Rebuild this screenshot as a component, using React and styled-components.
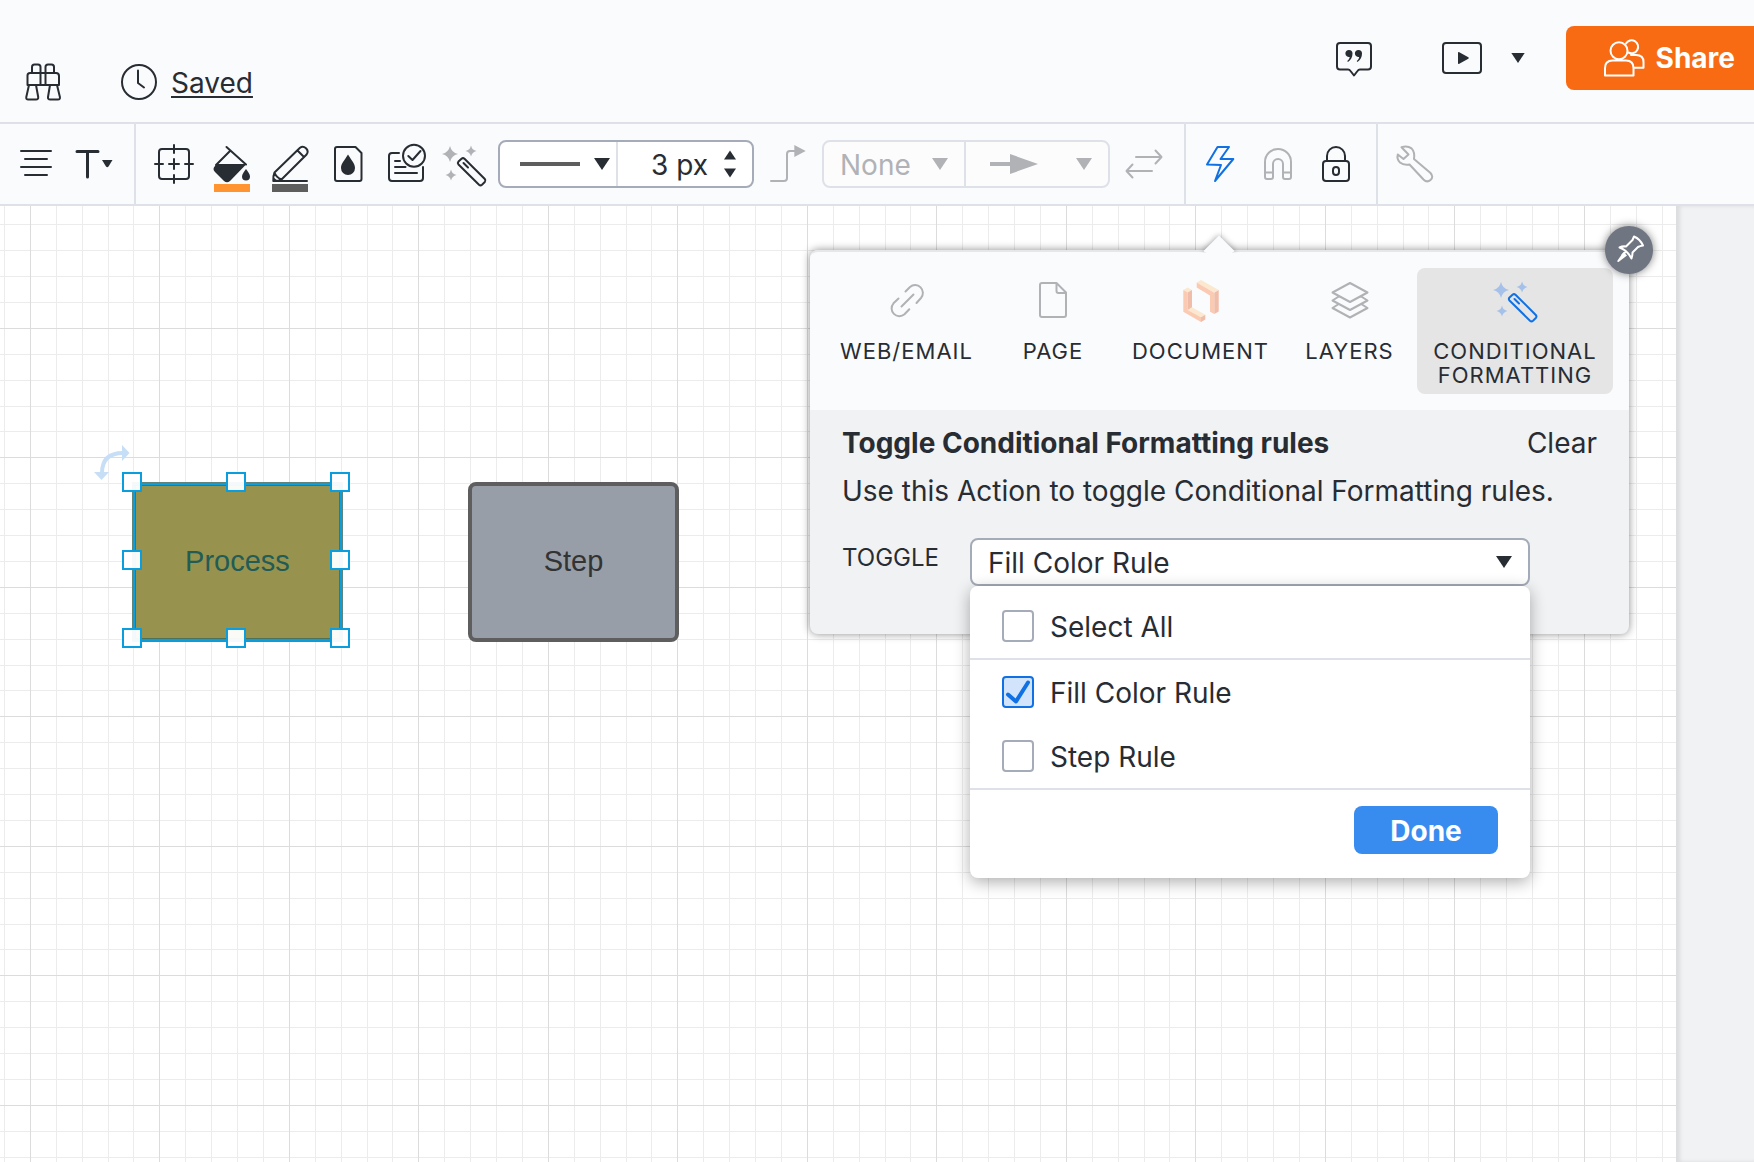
import React, { useState } from "react";
import styled, { createGlobalStyle, css } from "styled-components";

const color = {
  ink: "#282c33",
  muted: "#b0b2b5",
  surface: "#fafbfd",
  panel: "#f1f2f4",
  line: "#dfe1e8",
  outline: "#a5abb8",
  blue: "#1071e5",
  button: "#388cf0",
  orange: "#f96b13",
  handle: "#0a9edf",
};

const GlobalStyle = createGlobalStyle`
  *, *::before, *::after { box-sizing: border-box; }
  body {
    margin: 0;
    color: ${color.ink};
    font-family: Inter, "Liberation Sans", sans-serif;
    font-size: 28px;
    line-height: 32px;
  }
  button, input, select {
    margin: 0;
    padding: 0;
    border: 0;
    background: none;
    color: inherit;
    font: inherit;
  }
  button { cursor: pointer; }
  button:disabled { cursor: default; }
  svg { display: block; flex: none; overflow: visible; }
  h2, p { margin: 0; }
`;

/* ---------- icons ---------- */

const Svg = styled.svg.attrs((p) => ({
  viewBox: p.viewBox || "0 0 40 40",
  "aria-hidden": true,
}))`
  width: ${(p) => p.$w || 40}px;
  height: ${(p) => p.$h || 40}px;
  fill: none;
  stroke: currentColor;
  stroke-width: 2;
  stroke-linejoin: round;
  stroke-linecap: round;
`;

const Solid = styled.g`
  fill: currentColor;
  stroke: none;
`;

const Caret = ({ w = 16, h = 12 }) => (
  <Svg viewBox="0 0 16 12" $w={w} $h={h}>
    <Solid><path d="M0 0H16L8 12Z" /></Solid>
  </Svg>
);

const Binoculars = () => (
  <Svg>
    <path d="M9 11V5q0-2.5 2.500-2.500h3.500q2.500 0 2.500 2.500V23M31 11V5q0-2.500-2.500-2.500h-3.500q-2.500 0-2.500 2.500V23" />
    <path d="M4.500 23V13.500q0-2.500 2.500-2.500H33q3 0 3 3V23Z" />
    <path d="M6 23 3.300 35q-.5 2.500 2 2.500H13q2.500 0 2.200-2.500L13 23M34 23l2.900 12q.5 2.500-2 2.500H27.200q-2.500 0-2.200-2.500L27 23" />
  </Svg>
);

const Clock = () => (
  <Svg>
    <circle cx="20" cy="20" r="17" />
    <path d="M19 8.500V21l6 4.500" />
  </Svg>
);

const Comment = () => (
  <Svg>
    <path d="M6 5H34q3 0 3 3V28.500q0 3-3 3H26q-1.500 0-2.500 1.500L20 37.500 16.500 33q-1-1.500-2.500-1.500H6q-3 0-3-3V8q0-3 3-3Z" />
    <Solid>
      <path d="M15 12a3.500 3.500 0 0 1 3.500 3.500c0 3.500-1.500 6.500-4.500 8.500l-.8-.9c1.400-1.200 2.200-2.500 2.500-4.200A3.500 3.500 0 1 1 15 12Z" />
      <path d="M24.500 12a3.500 3.500 0 0 1 3.500 3.500c0 3.500-1.500 6.500-4.500 8.500l-.8-.9c1.400-1.200 2.200-2.500 2.500-4.200a3.500 3.500 0 1 1-.7-6.900Z" />
    </Solid>
  </Svg>
);

const Play = () => (
  <Svg>
    <rect x="1" y="5" width="38" height="30" rx="3" />
    <Solid><path d="M16 15q0-1.500 1.300-.8l9 5q1.200.8 0 1.600l-9 5Q16 26.500 16 25Z" /></Solid>
  </Svg>
);

const People = () => (
  <Svg>
    <circle cx="15" cy="12.700" r="8.500" />
    <path d="M1 37.500V30q0-7.500 7.500-7.500H22q7.500 0 7.500 7.500V37.500Z" />
    <path d="M22 5.500A6.500 6.500 0 1 1 24.500 14.500M27 17H32q7.500 0 7.500 7V29.700H30" />
  </Svg>
);

const AlignCenter = () => (
  <Svg>
    <path d="M5 7H35M9 15H31M5 23H35M9 31H31" />
  </Svg>
);

const TextTool = () => (
  <Svg>
    <path d="M3 7.500H24M13.500 7.500V33" strokeWidth="3" />
    <Solid><path d="M28 16H38.500L34.500 22.500Q33.200 24 32 22.500Z" /></Solid>
  </Svg>
);

const Frame = () => (
  <Svg>
    <rect x="5" y="5" width="30" height="30" rx="3" />
    <path d="M20 1V9M20 31V39M1 20H9M31 20H39M15 20H25M20 15V25" />
  </Svg>
);

const Bucket = () => (
  <Svg>
    <path d="M14.500 3 34 20.500M18.500 6.500 4 21" />
    <Solid>
      <path d="M5 20H34.500L18 37Q15 39.500 12 37L3 28Q0 25 3 22Z" />
      <path d="M34 25c2 3 4 5 4 7.500a4 4 0 0 1-8 0c0-2.500 2-4.500 4-7.500Z" />
      <rect x="2" y="40" width="36" height="8" fill="#ff9430" />
    </Solid>
  </Svg>
);

const Pencil = () => (
  <Svg>
    <path d="M4.500 28.500 30 3.700q3-2.200 6 .6 3 3 .6 6.200L11.500 35.500Q8 37.500 3.300 37 3 32 4.500 28.500ZM27.500 6.500l6 6M4.500 28.500q1.500 5 7 7M3.500 37H37" />
    <Solid>
      <path d="M3 37V33L8 37Z" />
      <rect x="2" y="40" width="36" height="8" fill="#5e5e5e" />
    </Solid>
  </Svg>
);

const Opacity = () => (
  <Svg>
    <path d="M9 3H27.500L33.500 9V35q0 2-2 2H9Q7 37 7 35V5Q7 3 9 3Z" />
    <Solid><path d="M20 10.500c3.500 6 7 9 7 13.500a7 7 0 0 1-14 0c0-4.500 3.500-7.500 7-13.500Z" /></Solid>
  </Svg>
);

const NoteCheck = () => (
  <Svg>
    <path d="M13 9H6Q3 9 3 12V34q0 3 3 3H34q3 0 3-3V23M9 17h5M9 23H19.500M9 29H31" />
    <circle cx="28" cy="11.700" r="11" />
    <path d="M22.300 12l4.200 4 8-9" />
  </Svg>
);

const Wand = ({ tint }) => (
  <Svg>
    <Solid>
      <g fill={tint}>
        <path d="M6 2Q7.500 8.500 14 10 7.500 11.500 6 18 4.500 11.500-2 10 4.500 8.500 6 2Z" />
        <path d="M27 1.500Q28 6 32.500 7 28 8 27 12.500 26 8 21.500 7 26 6 27 1.500Z" />
        <path d="M7 25.500Q8 30 12.500 31 8 32 7 36.500 6 32 1.500 31 6 30 7 25.500Z" />
      </g>
    </Solid>
    <path d="M14.500 17.500 17.500 14.700q1.500-1.200 3 0L40.800 35q1.300 1.500 0 3L38 40.700q-1.500 1.300-3 0L14.500 20.500q-1.300-1.500 0-3ZM19.500 19l4.500 4.500" />
  </Svg>
);

const Elbow = () => (
  <Svg>
    <path d="M3 37H16q3 0 3-3V10q0-3 3-3h5" />
    <Solid><path d="M26.300 1 37.700 7 26.300 13Z" /></Solid>
  </Svg>
);

const Swap = () => (
  <Svg>
    <path d="M12 13H37.500M31.500 6.500l6 6.500-6 6.500M28 27H2.500M8.500 20.500l-6 6.500 6 6.500" />
  </Svg>
);

const Bolt = () => (
  <Svg>
    <path d="M17.500 3H29L20.500 15H33.300L15 37 21 21 7 20.500Z" />
  </Svg>
);

const Magnet = () => (
  <Svg>
    <path d="M7 18a13 13 0 0 1 26 0V33q0 2-2 2H27q-2 0-2-2V20a5 5 0 0 0-10 0V33q0 2-2 2H9q-2 0-2-2ZM7 28.500h8M25 28.500h8" />
  </Svg>
);

const Lock = () => (
  <Svg>
    <rect x="7" y="17" width="26" height="20" rx="3" />
    <path d="M11 17V12a9 9 0 0 1 18 0V17" />
    <rect x="17" y="23" width="6" height="8" rx="3" />
  </Svg>
);

const Wrench = () => (
  <Svg>
    <path d="M7.500 3.200q6-1.800 10 1.200 3.500 3.500 2.500 10.500L36.500 29q3.500 4 0 7-3.500 3-7-.5L15.500 20.500q-6 1-9.500-2Q2.500 15 3.800 10.500L9.500 15 14.500 10.500Z" />
  </Svg>
);

const LinkIcon = () => (
  <Svg>
    <path d="M18.500 11.500 23 7a7.800 7.800 0 0 1 11 11l-4.500 5M11.500 18.500 6.500 23.300a7.800 7.800 0 0 0 11 11l4.800-5M14.500 26.500l12-12" />
  </Svg>
);

const PageIcon = () => (
  <Svg>
    <path d="M9 3H23.500L33 12.500V35q0 2-2 2H9Q7 37 7 35V5Q7 3 9 3ZM23.500 3v8q0 2 2 2H33" />
  </Svg>
);

const DocumentIcon = () => (
  <Svg>
    <Solid>
      <path fill="#fbe8cf" d="M2.300 10 6.700 7.500 11 10 6.700 12.500ZM6.700 30 11 27.300 24.300 34.700 20 37.300ZM15.700 2.500 20 0 37.700 10 33.300 12.700Z" />
      <path fill="#fbcab3" d="M2.300 10 6.700 12.500V30L20 37.300V42L2.300 31.800ZM15.700 2.500 33.300 12.700V34L29 31.700V15.500L15.700 7.500Z" />
      <path fill="#efbda9" d="M6.700 12.500 11 10V27.300L6.700 30ZM20 37.300 24.300 34.700V39.500L20 42ZM33.300 12.700 37.700 10V31.500L33.300 34Z" />
    </Solid>
  </Svg>
);

const LayersIcon = () => (
  <Svg>
    <path d="M20 3 37.500 12.500 20 22 2.500 12.500ZM8 17 2.500 20.500 20 30 37.500 20.500 32 17M8 24.500 2.500 28 20 37.500 37.500 28 32 24.500" />
  </Svg>
);

const PinIcon = () => (
  <Svg viewBox="0 0 48 48" $w={48} $h={48}>
    <path d="M29 10.500q6 2.500 9 9-3 .5-5 1.500l-5.500 5.500q0 3-1 6Q22 24 14.500 21.500q3-1.500 6.500-1L27.500 14ZM20 26.500l-2.500 2.500" />
    <Solid><path d="M18.500 26 22 29.500 13.500 36Q12 36 12.500 34.500Z" /></Solid>
  </Svg>
);

/* ---------- page header ---------- */

const Page = styled.div`
  display: flex;
  flex-direction: column;
  min-height: 100vh;
  overflow-x: hidden;
`;

const Header = styled.header`
  display: flex;
  justify-content: space-between;
  align-items: flex-start;
  padding: 26px 0 20px 23px;
  border-bottom: 2px solid ${color.line};
  background: ${color.surface};
`;

const HeaderLeft = styled.div`
  display: flex;
  align-items: center;
  gap: 56px;
  padding-top: 36px;
`;

const HeaderRight = styled.div`
  display: flex;
  align-items: center;
`;

const PlainButton = styled.button`
  display: flex;
  align-items: center;
  justify-content: center;
`;

const SavedLink = styled.a`
  display: flex;
  align-items: center;
  gap: 12px;
  color: inherit;
  text-decoration: none;

  span {
    padding-top: 2px;
    text-decoration: underline;
    text-decoration-thickness: 2px;
    text-underline-offset: 3px;
    text-decoration-skip-ink: none;
  }
`;

const PresentGroup = styled.div`
  display: flex;
  align-items: center;
  gap: 29px;
  margin: 0 41px 0 68px;
`;

const ShareButton = styled.button`
  display: flex;
  align-items: center;
  gap: 12px;
  height: 64px;
  padding: 0 19px 0 38px;
  border-radius: 8px 0 0 8px;
  background: ${color.orange};
  color: #fff;
  font-weight: 700;
`;

/* ---------- toolbar ---------- */

const Toolbar = styled.div`
  display: flex;
  height: 82px;
  border-bottom: 2px solid ${color.line};
  background: ${color.surface};
`;

const ToolGroup = styled.div`
  display: flex;
  align-items: center;
  padding: 0 ${(p) => p.$end || 11}px 0 ${(p) => p.$start || 7}px;

  & + & {
    border-left: 2px solid ${color.line};
  }
`;

const ToolButton = styled.button`
  display: flex;
  align-items: center;
  justify-content: center;
  width: 58px;
  height: 80px;
  color: ${(p) => (p.disabled ? color.muted : p.$active ? color.blue : color.ink)};
`;

const Combo = styled.div`
  display: flex;
  height: 48px;
  margin: 0 5px;
  border: 2px solid ${(p) => (p.$off ? color.line : color.outline)};
  border-radius: 8px;
  background: ${(p) => (p.$off ? "#fcfcfd" : "#fff")};
  color: ${(p) => (p.$off ? color.muted : color.ink)};
`;

const comboPart = css`
  width: ${(p) => p.$w}px;

  & + & {
    border-left: 2px solid ${(p) => (p.$off ? color.line : color.outline)};
  }
`;

const ComboCell = styled.div`
  ${comboPart}
  display: flex;
  align-items: stretch;
`;

const DrawnChoice = styled.button`
  display: flex;
  flex: 1;
  align-items: center;
  justify-content: space-between;
  padding: 0 ${(p) => (p.disabled ? 16 : 6)}px 0 ${(p) => (p.disabled ? 24 : 20)}px;
`;

const WidthInput = styled.input`
  flex: 1;
  min-width: 0;
  padding: 2px 16px 0 0;
  text-align: right;
  outline: none;
`;

const Stepper = styled.div`
  display: flex;
  flex-direction: column;
  justify-content: center;
  gap: 8px;
  padding-right: 16px;

  button:first-child { transform: rotate(180deg); }
`;

const SelectWrap = styled.div`
  display: grid;
  flex: 1;
  align-items: center;

  > * { grid-area: 1 / 1; }
  > svg {
    justify-self: end;
    margin-right: 16px;
    pointer-events: none;
  }
`;

const Select = styled.select`
  width: 100%;
  height: 44px;
  padding: 2px 40px 0 16px;
  appearance: none;
  outline: none;
  opacity: 1;
`;

/* ---------- canvas ---------- */

const Workspace = styled.div`
  display: flex;
  flex: 1;
`;

const Canvas = styled.main`
  position: relative;
  flex: 1;
  min-height: 720px;
  background: #fff;
`;

const GridSvg = styled.svg`
  position: absolute;
  inset: 0;
  width: 100%;
  height: 100%;
  shape-rendering: crispEdges;
`;

const Rail = styled.aside`
  width: 78px;
  background: ${color.panel};
  box-shadow: inset 4px 0 4px rgba(0, 0, 0, 0.09);
`;

const minor = [26, 52, 78, 103, 155, 181, 207, 233];
const major = [0, 129];

const Grid = () => (
  <GridSvg aria-hidden="true">
    <defs>
      <pattern id="grid" x="30" y="122" width="259" height="259" patternUnits="userSpaceOnUse">
        {[[minor, "#ececec"], [major, "#dcdcdc"]].map(([lines, fill]) =>
          lines.map((n) => (
            <g key={n} fill={fill}>
              <rect x={n} y="0" width="1" height="259" />
              <rect x="0" y={n} width="259" height="1" />
            </g>
          ))
        )}
      </pattern>
    </defs>
    <rect width="100%" height="100%" fill="url(#grid)" />
  </GridSvg>
);

const Shape = styled.div`
  position: absolute;
  top: 276px;
  left: ${(p) => p.$left}px;
  display: flex;
  align-items: center;
  justify-content: center;
  width: 211px;
  height: 160px;
  padding-bottom: 2px;
  border: 4px solid #5e5e5e;
  border-radius: 8px;
  background: #979ea8;
  color: #333;
  font-family: "Liberation Sans", Arial, sans-serif;
  font-size: 29px;

  ${(p) =>
    p.$selected &&
    css`
      border: 3px solid ${color.handle};
      border-radius: 0;
      outline: 1px solid #5d8580;
      outline-offset: -1px;
      background: #97934f;
      box-shadow: inset 0 0 0 1px #4d7259;
      color: #225c55;
    `}
`;

const Handle = styled.span`
  position: absolute;
  left: ${(p) => p.$x - 13}px;
  top: ${(p) => p.$y - 13}px;
  width: 20px;
  height: 20px;
  border: 2px solid ${color.handle};
  background: rgba(255, 255, 255, 0.95);
`;

const RotateHandle = styled.div`
  position: absolute;
  left: 92px;
  top: 238px;
  color: #c7def7;
`;

const handles = [
  [0, 0], [104, 0], [208, 0],
  [0, 78], [208, 78],
  [0, 156], [104, 156], [208, 156],
];

/* ---------- action popover ---------- */

const Popover = styled.section`
  position: absolute;
  left: 810px;
  top: 44px;
  width: 819px;
  border-radius: 8px;
  background: ${color.panel};
  box-shadow: 0 0 8px rgba(0, 0, 0, 0.45);
`;

/* Only the upper corner of the turned square shows above the panel edge. */
const Pointer = styled.span`
  position: absolute;
  left: 398px;
  top: -10px;
  width: 22px;
  height: 22px;
  background: ${color.surface};
  box-shadow: 0 0 6px rgba(0, 0, 0, 0.4);
  clip-path: polygon(-8px -8px, 32px -8px, -8px 32px);
  transform: rotate(45deg);
`;

const PinButton = styled.button`
  position: absolute;
  right: -24px;
  top: -24px;
  width: 48px;
  height: 48px;
  border-radius: 50%;
  background: #6f7682;
  box-shadow: 0 0 8px rgba(0, 0, 0, 0.5);
  color: #fff;
`;

const Tabs = styled.div`
  display: grid;
  grid-template-columns: 161fr 112fr 163fr 115fr 196fr;
  gap: 10px;
  padding: 16px;
  border-top: 2px solid #e6e7e8;
  border-radius: 8px 8px 0 0;
  background: ${color.surface};
`;

const Tab = styled.button`
  display: flex;
  flex-direction: column;
  align-items: center;
  gap: 19px;
  min-width: 0;
  padding: 12px 0 7px;
  border-radius: 8px;
  background: ${(p) => (p.$active ? "#e5e5e5" : "transparent")};
  font-size: 22px;
  line-height: 24px;
  letter-spacing: 1px;
  text-transform: uppercase;

  svg { color: ${(p) => (p.$active ? color.blue : color.muted)}; }
`;

const Body = styled.div`
  padding: 17px 32px 48px;
`;

const TitleRow = styled.div`
  display: flex;
  align-items: center;
  justify-content: space-between;
`;

const Title = styled.h2`
  font-size: 28px;
  font-weight: 700;
`;

const Hint = styled.p`
  margin-top: 16px;
  white-space: nowrap;
`;

const Field = styled.div`
  position: relative;
  display: grid;
  grid-template-columns: 128px 560px;
  align-items: center;
  margin-top: 31px;
`;

const FieldLabel = styled.label`
  padding-bottom: 8px;
  font-size: 24px;
  text-transform: uppercase;
`;

const SelectBox = styled.div`
  display: flex;
  border: 2px solid ${color.outline};
  border-radius: 8px;
  background: #fff;
`;

const Menu = styled.div`
  position: absolute;
  left: 128px;
  top: 48px;
  width: 560px;
  border-radius: 8px;
  background: #fff;
  box-shadow: 0 4px 16px rgba(0, 0, 0, 0.32);
`;

const MenuGroup = styled.div`
  padding-top: ${(p) => (p.$first ? 8 : 0)}px;
  border-bottom: 2px solid ${color.line};
`;

const Option = styled.label`
  display: flex;
  align-items: center;
  gap: 16px;
  height: 64px;
  padding: 0 32px;

  > span:last-child { padding-top: 2px; }
`;

const Tick = styled.span`
  display: grid;
  width: 32px;
  height: 32px;

  > * { grid-area: 1 / 1; }
  > svg { color: ${color.blue}; stroke-width: 4; pointer-events: none; }
`;

const Checkbox = styled.input`
  width: 32px;
  height: 32px;
  appearance: none;
  border: 2px solid ${color.outline};
  border-radius: 4px;
  background: #fff;

  &:checked {
    border-color: ${color.blue};
    background: #d2e4fb;
  }
`;

const MenuFooter = styled.div`
  display: flex;
  justify-content: flex-end;
  padding: 16px 32px 24px;
`;

const DoneButton = styled.button`
  width: 144px;
  height: 48px;
  padding-top: 2px;
  border-radius: 8px;
  background: ${color.button};
  color: #fff;
  font-weight: 700;
`;

const CheckOption = ({ id, label, checked, onChange }) => (
  <Option htmlFor={id}>
    <Tick>
      <Checkbox id={id} type="checkbox" checked={checked} onChange={onChange} />
      {checked && (
        <Svg viewBox="0 0 32 32" $w={32} $h={32}>
          <path d="M6 18.500 14 25.500 26 6.500" />
        </Svg>
      )}
    </Tick>
    <span>{label}</span>
  </Option>
);

const tabs = [
  ["Web/Email", <LinkIcon />],
  ["Page", <PageIcon />],
  ["Document", <DocumentIcon />],
  ["Layers", <LayersIcon />],
  ["Conditional Formatting", <Wand tint="#a5c1ea" />],
];

function ActionPopover() {
  const [tab, setTab] = useState("Conditional Formatting");
  const [rules, setRules] = useState({ fill: true, step: false });
  const all = rules.fill && rules.step;
  const flip = (key) => () => setRules((r) => ({ ...r, [key]: !r[key] }));

  return (
    <Popover>
      <Tabs role="tablist">
        {tabs.map(([name, icon]) => (
          <Tab
            key={name}
            type="button"
            role="tab"
            aria-selected={tab === name}
            $active={tab === name}
            onClick={() => setTab(name)}
          >
            {icon}
            <span>{name}</span>
          </Tab>
        ))}
      </Tabs>
      <Pointer />
      <PinButton type="button" aria-label="Pin panel"><PinIcon /></PinButton>
      <Body>
        <TitleRow>
          <Title>Toggle Conditional Formatting rules</Title>
          <button type="button">Clear</button>
        </TitleRow>
        <Hint>Use this Action to toggle Conditional Formatting rules.</Hint>
        <Field>
          <FieldLabel htmlFor="rule">Toggle</FieldLabel>
          <SelectBox>
            <SelectWrap>
              <Select id="rule" defaultValue="fill">
                <option value="fill">Fill Color Rule</option>
                <option value="step">Step Rule</option>
              </Select>
              <Caret />
            </SelectWrap>
          </SelectBox>
          <Menu>
            <MenuGroup $first>
              <CheckOption
                id="all"
                label="Select All"
                checked={all}
                onChange={() => setRules({ fill: !all, step: !all })}
              />
            </MenuGroup>
            <MenuGroup>
              <CheckOption id="fill" label="Fill Color Rule" checked={rules.fill} onChange={flip("fill")} />
              <CheckOption id="step" label="Step Rule" checked={rules.step} onChange={flip("step")} />
            </MenuGroup>
            <MenuFooter>
              <DoneButton type="button">Done</DoneButton>
            </MenuFooter>
          </Menu>
        </Field>
      </Body>
    </Popover>
  );
}

const Tool = ({ label, icon, ...rest }) => (
  <ToolButton type="button" aria-label={label} {...rest}>{icon}</ToolButton>
);

export default function App() {
  return (
    <Page>
      <GlobalStyle />
      <Header>
        <HeaderLeft>
          <PlainButton type="button" aria-label="Find"><Binoculars /></PlainButton>
          <SavedLink href="#history"><Clock /><span>Saved</span></SavedLink>
        </HeaderLeft>
        <HeaderRight>
          <PlainButton type="button" aria-label="Comments"><Comment /></PlainButton>
          <PresentGroup>
            <PlainButton type="button" aria-label="Present"><Play /></PlainButton>
            <PlainButton type="button" aria-label="Present options"><Caret w={14} h={10} /></PlainButton>
          </PresentGroup>
          <ShareButton type="button"><People />Share</ShareButton>
        </HeaderRight>
      </Header>

      <Toolbar role="toolbar" aria-label="Formatting">
        <ToolGroup>
          <Tool label="Align" icon={<AlignCenter />} />
          <Tool label="Text" icon={<TextTool />} />
        </ToolGroup>
        <ToolGroup $start={9}>
          <Tool label="Position" icon={<Frame />} />
          <Tool label="Fill color" icon={<Bucket />} />
          <Tool label="Line color" icon={<Pencil />} />
          <Tool label="Opacity" icon={<Opacity />} />
          <Tool label="Shape data" icon={<NoteCheck />} />
          <Tool label="Magic format" icon={<Wand tint={color.muted} />} />
          <Combo>
            <ComboCell $w={116}>
              <DrawnChoice type="button" aria-label="Line style" aria-haspopup="listbox">
                <Svg viewBox="0 0 60 4" $w={60} $h={4}>
                  <Solid><rect width="60" height="4" fill="#5e5e5e" /></Solid>
                </Svg>
                <Caret />
              </DrawnChoice>
            </ComboCell>
            <ComboCell $w={136}>
              <WidthInput type="text" aria-label="Line width" defaultValue="3 px" />
              <Stepper>
                <PlainButton type="button" aria-label="Increase width"><Caret w={12} h={10} /></PlainButton>
                <PlainButton type="button" aria-label="Decrease width"><Caret w={12} h={10} /></PlainButton>
              </Stepper>
            </ComboCell>
          </Combo>
          <Tool label="Line shape" icon={<Elbow />} disabled />
          <Combo $off>
            <ComboCell $w={140} $off>
              <SelectWrap>
                <Select aria-label="Line start" disabled defaultValue="none">
                  <option value="none">None</option>
                </Select>
                <Caret />
              </SelectWrap>
            </ComboCell>
            <ComboCell $w={144} $off>
              <DrawnChoice type="button" aria-label="Line end" disabled>
                <Svg viewBox="0 0 48 20" $w={48} $h={20}>
                  <Solid><path d="M0 8H20V0L48 10 20 20V12H0Z" /></Solid>
                </Svg>
                <Caret />
              </DrawnChoice>
            </ComboCell>
          </Combo>
          <Tool label="Swap ends" icon={<Swap />} disabled />
        </ToolGroup>
        <ToolGroup $start={5}>
          <Tool label="Actions" icon={<Bolt />} $active />
          <Tool label="Snap" icon={<Magnet />} disabled />
          <Tool label="Lock" icon={<Lock />} />
        </ToolGroup>
        <ToolGroup>
          <Tool label="Advanced" icon={<Wrench />} disabled />
        </ToolGroup>
      </Toolbar>

      <Workspace>
        <Canvas>
          <Grid />
          <RotateHandle>
            <Svg>
              <path d="M10 29Q10 9 31 9" strokeWidth="4" strokeLinecap="butt" />
              <Solid><path d="M30 1 37.500 9 30 17ZM2 28H17L9.500 36Z" /></Solid>
            </Svg>
          </RotateHandle>
          <Shape $left={132} $selected>
            Process
            {handles.map(([x, y]) => <Handle key={`${x}-${y}`} $x={x} $y={y} />)}
          </Shape>
          <Shape $left={468}>Step</Shape>
          <ActionPopover />
        </Canvas>
        <Rail />
      </Workspace>
    </Page>
  );
}
